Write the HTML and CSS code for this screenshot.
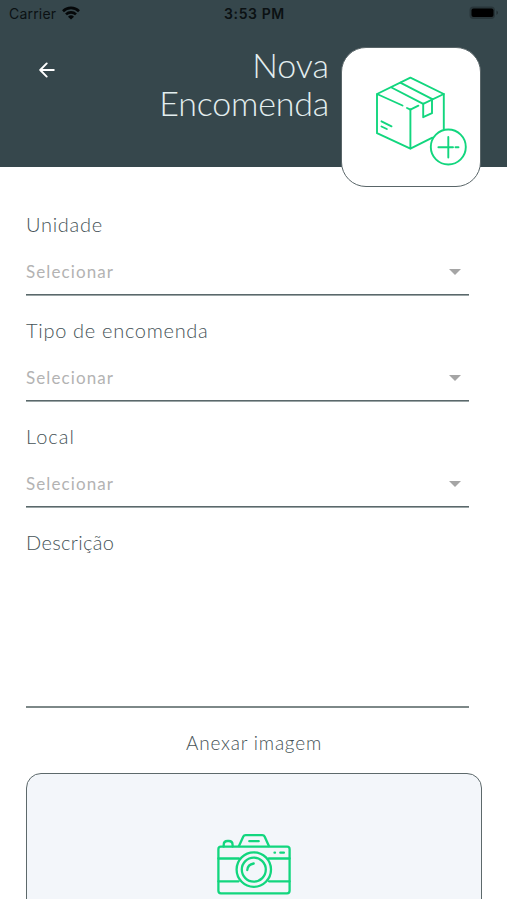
FILE: index.html
```
<!DOCTYPE html>
<html lang="pt-BR">
<head>
    <meta charset="UTF-8">
    <meta name="viewport" content="width=device-width, initial-scale=1.0">
    <title>Nova Encomenda</title>
    <link rel="stylesheet" href="styles.css">
</head>
<body>
    <div class="app">
        <header class="header">
            <div class="status-bar">
                <div class="carrier">
                    <span>Carrier</span>
                    <svg class="wifi" width="18" height="14" viewBox="0 0 18 14" fill="none" stroke="#050809" stroke-width="2.6">
                        <path d="M1 5.2a11.4 11.4 0 0 1 16 0"/>
                        <path d="M4 8.4a7.1 7.1 0 0 1 10 0"/>
                        <path d="M9 13.6L6 10.7a4.3 4.3 0 0 1 6 0z" fill="#050809" stroke="none"/>
                    </svg>
                </div>
                <span class="clock">3:53 PM</span>
                <div class="battery-wrap">
                    <svg width="31" height="14" viewBox="0 0 31 14">
                        <rect x="0.5" y="0.5" width="25.5" height="12.5" rx="4" fill="#29363a"/>
                        <rect x="2.5" y="2.5" width="22" height="8.5" rx="2" fill="#000"/>
                        <path d="M27.5 4.5q3 2.2 0 4.5z" fill="#222e31"/>
                    </svg>
                </div>
            </div>
            <div class="title-row">
                <button class="back" aria-label="Voltar">
                    <svg width="16" height="16" viewBox="0 0 16 16" fill="none" stroke="#fff" stroke-width="1.9" stroke-linecap="round" stroke-linejoin="round">
                        <path d="M7.7 1.4L1.2 8l6.5 6.6M1.5 8h13.3"/>
                    </svg>
                </button>
                <h1>Nova<br><span class="enc">Encomenda</span></h1>
                <div class="icon-card">
                    <svg width="140" height="140" viewBox="341 47 140 140" fill="none" stroke="#12d67e" stroke-width="1.9" stroke-linecap="round" stroke-linejoin="round">
                        <!-- caixa -->
                        <path d="M402.5 105.5L377 94l33.4-16.3L443.8 94v35.5M377 94v39.2l33.4 15.5 22-11M410.4 148.7v-39.2"/>
                        <path d="M407 108l3.4 1.7 8-4M391.5 87.5l31.7 16.3L443.8 94M400.3 82.7l32 16.4"/>
                        <path d="M423.2 103.8v13.4l8.8-4V99.2"/>
                        <path d="M381.5 121.3l10 5M381.5 126.5l5.3 2.5"/>
                        <!-- adicionar -->
                        <circle cx="448.3" cy="147" r="17.5"/>
                        <path d="M448.3 137v20.5M438.4 147.3h14.6M455.5 147.3h3"/>
                    </svg>
                </div>
            </div>
        </header>

        <main class="form">
            <div class="field">
                <label>Unidade</label>
                <div class="select"><span>Selecionar</span><i class="caret"></i></div>
            </div>
            <div class="field">
                <label>Tipo de encomenda</label>
                <div class="select"><span>Selecionar</span><i class="caret"></i></div>
            </div>
            <div class="field">
                <label class="local">Local</label>
                <div class="select"><span>Selecionar</span><i class="caret"></i></div>
            </div>
            <div class="field description">
                <label class="descricao">Descrição</label>
            </div>
            <p class="attach-label">Anexar imagem</p>
            <div class="attach-box">
                <svg width="76" height="62" viewBox="216 833 76 62" fill="none" stroke="#12d67e" stroke-width="2.3" stroke-linecap="round" stroke-linejoin="round">
                    <rect x="218.4" y="846.7" width="71.2" height="46.6" rx="2.5"/>
                    <path d="M223.7 846.5v-1.6q0-3.9 3.8-3.9h1.3q3.8 0 3.8 3.9v1.6"/>
                    <path d="M239 846l4.3-9.5q.6-1.4 2.3-1.4h16.7q1.7 0 2.3 1.4l4.3 9.5M249.3 841.2h9.4"/>
                    <path d="M218.4 858.5h20.5M268.8 858.5h20.8M218.4 881.3h20.2M269 881.3h20.6"/>
                    <circle cx="253.8" cy="869.6" r="17.2"/>
                    <circle cx="253.8" cy="869.6" r="12"/>
                    <path d="M247.3 870q.3-5.3 6.4-6.5"/>
                    <path d="M274.5 852.7h.5M280.3 852.7h3.6"/>
                </svg>
            </div>
        </main>
    </div>
</body>
</html>
```

FILE: styles.css
```
* {
    box-sizing: border-box;
}
body {
    margin: 0;
    background: #fff;
    font-family: Lato, "Liberation Sans", sans-serif;
    font-weight: 300;
    color: #465357;
}
.app {
    height: 899px;
    overflow: hidden;
}
.header {
    height: 167px;
    background: #36474c;
}
.status-bar {
    display: grid;
    grid-template-columns: 1fr auto 1fr;
    align-items: center;
    height: 27px;
    padding: 0 7px 0 9px;
    font-family: Inter, sans-serif;
    font-size: 14px;
    font-weight: 400;
    color: #0b1113;
}
.carrier {
    display: flex;
    align-items: center;
    gap: 6px;
    letter-spacing: 0.2px;
}
.wifi {
    margin-top: -2px;
}
.clock {
    font-weight: 600;
    letter-spacing: 0.6px;
}
.battery-wrap {
    display: flex;
    justify-content: flex-end;
    margin-top: -1px;
}
.title-row {
    display: flex;
    align-items: flex-start;
    padding: 20px 26px 0 39px;
}
.back {
    display: flex;
    margin-top: 15px;
    padding: 0;
    border: none;
    background: none;
}
h1 {
    flex: 1;
    margin: -1px 12px 0 0;
    font-size: 34px;
    font-weight: 300;
    line-height: 38px;
    text-align: right;
    color: #e3eeef;
}
.enc {
    letter-spacing: -0.2px;
}
.icon-card {
    display: flex;
    width: 140px;
    height: 140px;
    border: 1px solid #596568;
    border-radius: 25px;
    background: #fff;
}
.icon-card svg {
    flex: none;
    margin: -1px;
}
.form {
    padding: 44px 25px 0 26px;
}
.field {
    width: 443px;
    height: 106px;
}
label {
    display: block;
    height: 26px;
    font-size: 20px;
    line-height: 26px;
    letter-spacing: 0.7px;
}
.local {
    letter-spacing: 1px;
}
.descricao {
    letter-spacing: 0.35px;
}
.select {
    display: flex;
    align-items: center;
    justify-content: space-between;
    height: 58px;
    padding: 12px 8px 0 0;
    border-bottom: 1.5px solid #5a686b;
    border-bottom-width: 1px;
    box-shadow: 0 1px #9ba5a6;
    font-size: 17px;
    font-weight: 400;
    letter-spacing: 1.1px;
    color: #b3b3b3;
}
.caret {
    border: 6px solid transparent;
    border-top-color: #a5a5a5;
    border-bottom: none;
}
.description {
    height: 179px;
    border-bottom: 2px solid #7d8888;
}
.attach-label {
    margin: 22px 0 18px;
    font-size: 19px;
    line-height: 25px;
    letter-spacing: 0.8px;
    text-align: center;
}
.attach-box {
    display: flex;
    justify-content: center;
    height: 190px;
    padding-top: 59px;
    border: 1px solid #5d696b;
    border-radius: 15px;
    background: #f3f6fa;
}
```
